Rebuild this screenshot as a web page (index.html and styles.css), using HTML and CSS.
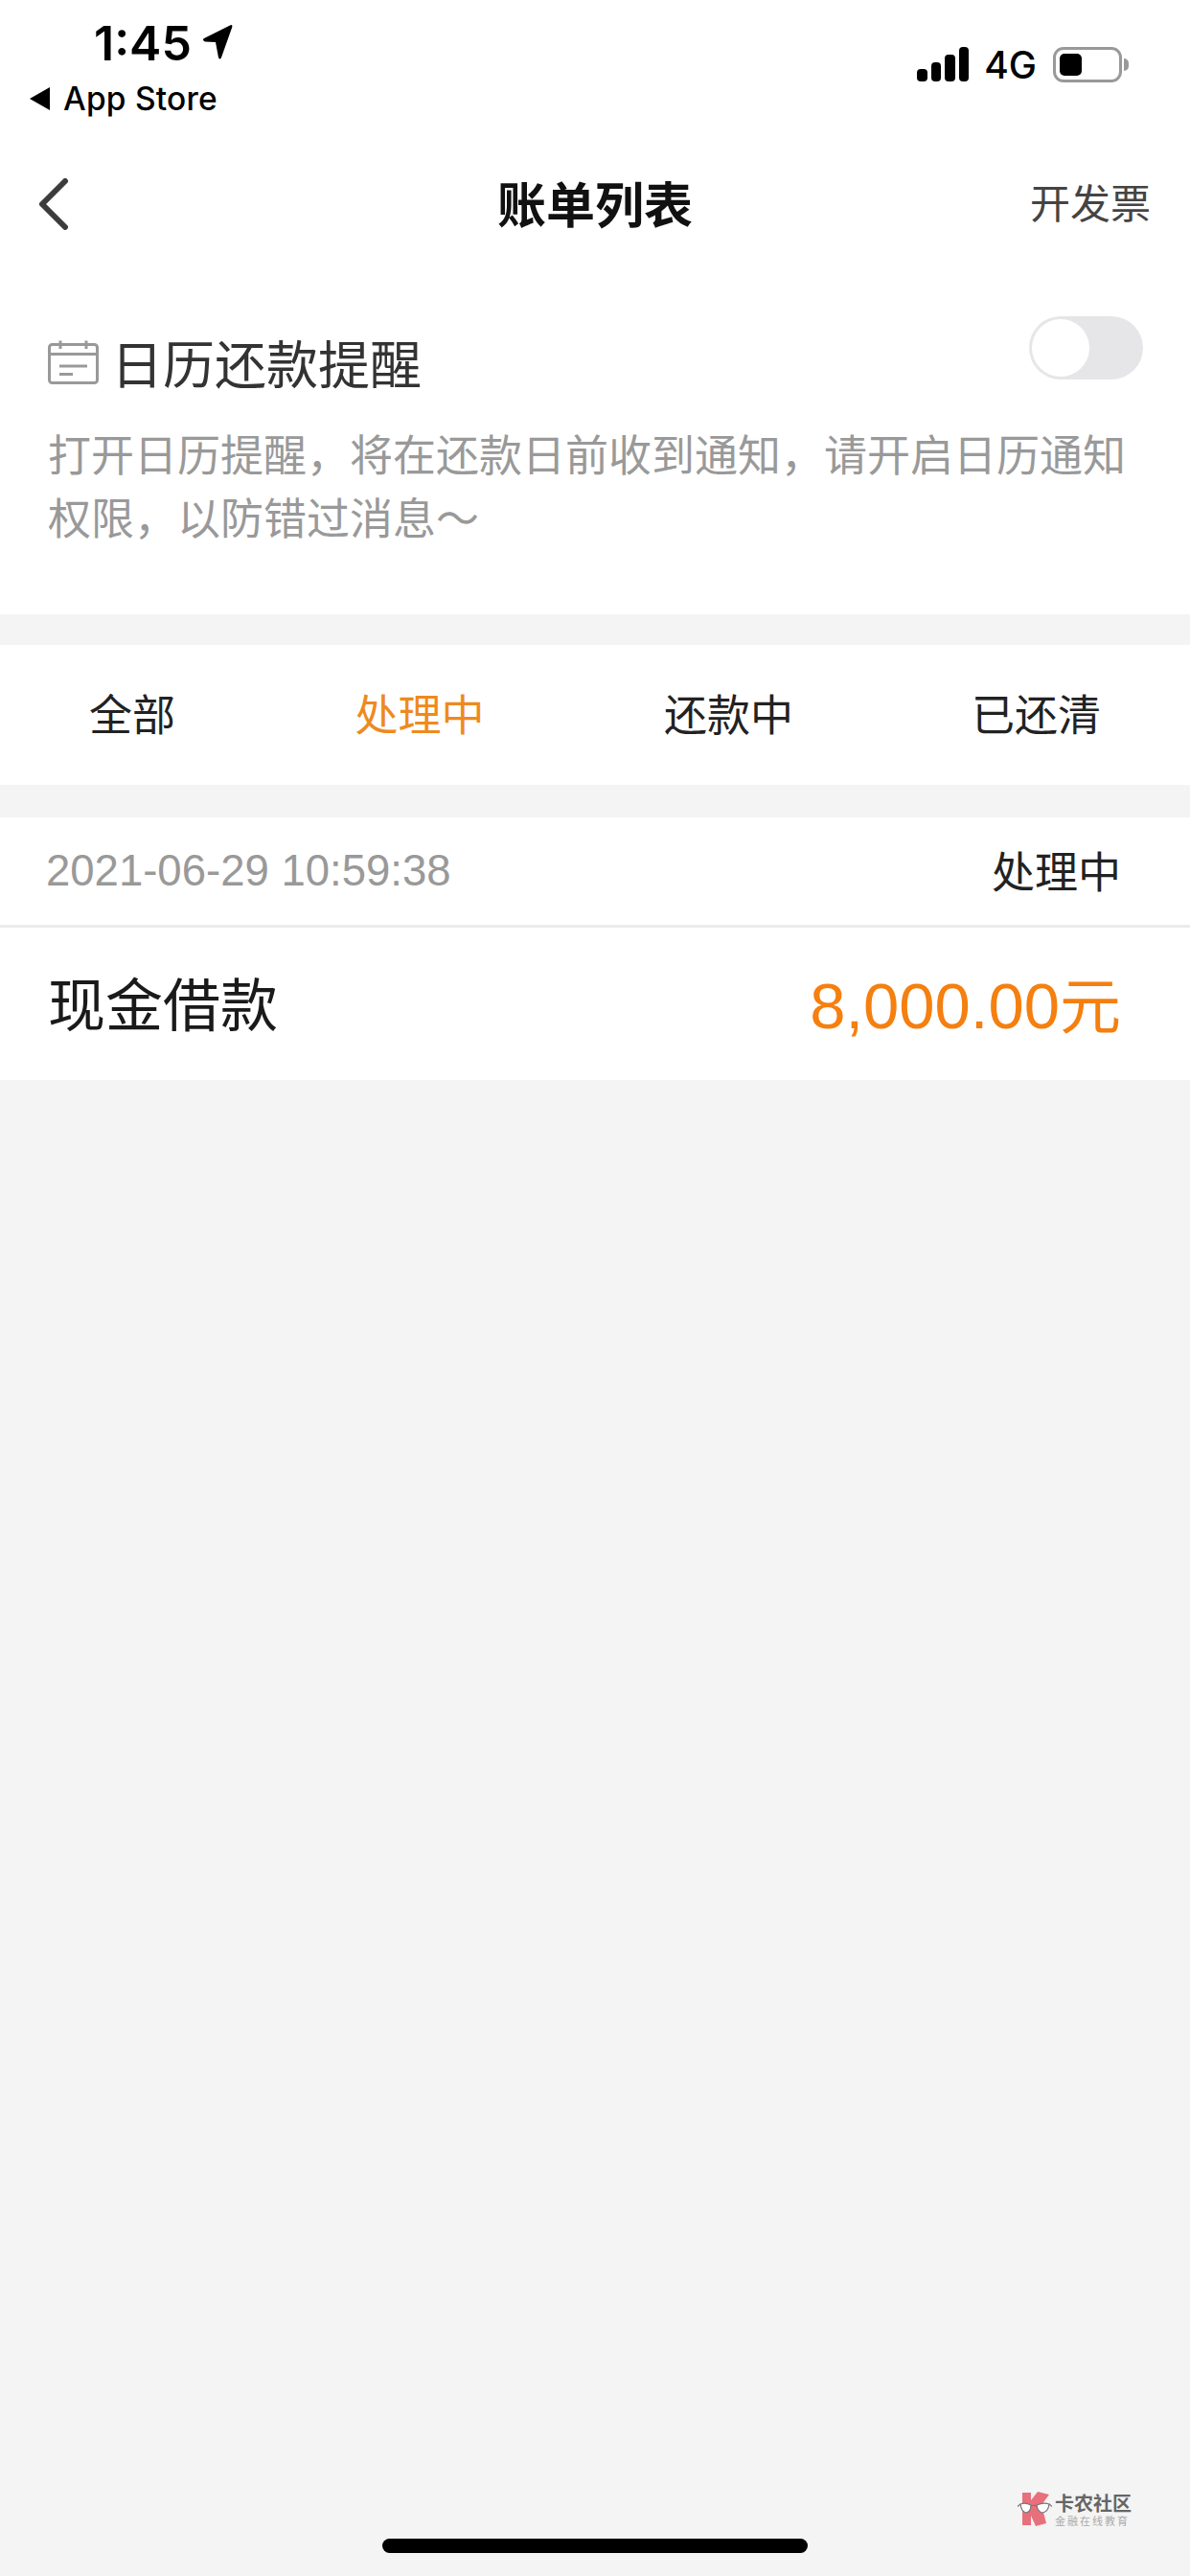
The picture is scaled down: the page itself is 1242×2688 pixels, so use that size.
FILE: index.html
```html
<!DOCTYPE html>
<html lang="zh-CN">
<head>
    <meta charset="UTF-8">
    <title>账单列表</title>
    <link rel="stylesheet" href="styles.css">
</head>
<body>
    <div class="page">
        <div class="statusbar">
            <div class="status-left">
                <div class="clock">
                    <span>1:45</span>
                    <svg class="loc-icon" viewBox="0 0 32 38"><path d="M2 15 L29 1.5 Q32 0 31.2 3.5 L20 35 Q18.500 38 17 35 L14 19 L3 18.500 Q-0.500 17 2 15 Z"/></svg>
                </div>
                <div class="back-app">
                    <svg class="back-tri" viewBox="0 0 21 24"><path d="M0 12 L21 0 V24 Z"/></svg>
                    <span>App Store</span>
                </div>
            </div>
            <div class="status-right">
                <div class="signal">
                    <i class="bar1"></i><i class="bar2"></i><i class="bar3"></i><i class="bar4"></i>
                </div>
                <span class="net">4G</span>
                <div class="battery"><div class="battery-fill"></div></div>
                <div class="battery-nub"></div>
            </div>
        </div>

        <div class="navbar">
            <svg class="nav-back" viewBox="0 0 32 54"><path d="M28 3 L4 27 L28 51"/></svg>
            <h1>账单列表</h1>
            <a class="nav-action">开发票</a>
        </div>

        <div class="reminder">
            <div class="reminder-head">
                <div class="reminder-title">
                    <svg class="cal-icon" viewBox="0 0 53 46">
                        <rect x="1.500" y="4.500" width="50" height="40" rx="3"/>
                        <path d="M1.500 14.500 H51.500 M13 0.500 V9 M40 0.500 V9 M12 27 H41 M12 35.500 H26"/>
                    </svg>
                    <span>日历还款提醒</span>
                </div>
                <div class="toggle"><div class="knob"></div></div>
            </div>
            <p class="reminder-desc">打开日历提醒，将在还款日前收到通知，请开启日历通知权限，以防错过消息～</p>
        </div>

        <div class="tabs">
            <div class="tab">全部</div>
            <div class="tab active">处理中</div>
            <div class="tab">还款中</div>
            <div class="tab">已还清</div>
        </div>

        <div class="bill">
            <div class="bill-top">
                <span class="bill-date">2021-06-29 10:59:38</span>
                <span class="bill-state">处理中</span>
            </div>
            <div class="bill-main">
                <span class="bill-name">现金借款</span>
                <span class="bill-amount">8,000.00<span class="unit">元</span></span>
            </div>
        </div>

        <div class="watermark">
            <svg class="wm-logo" viewBox="0 0 36 36">
                <path class="wm-k" d="M5 1 H14 V9 L21 0 L33 3 L25 14 L30 33 L19 36 L14 25 V35 L5 35 Z"/>
                <path class="wm-lens" d="M3 13 Q8 11 14 14 Q14 21 9 22 Q4 21 3 13 Z M20 14 Q27 11 33 13 Q32 21 26 22 Q21 21 20 14 Z"/>
                <path class="wm-arm" d="M14 15 Q17 13.500 20 15 M3 13 L0 15.500 M33 13 L36 15.500"/>
            </svg>
            <div class="wm-text">
                <div class="wm-name">卡农社区</div>
                <div class="wm-sub">金融在线教育</div>
            </div>
        </div>
        <div class="home-indicator"></div>
    </div>
</body>
</html>
```

FILE: styles.css
```css
* {
    box-sizing: border-box;
}

body {
    margin: 0;
    background-color: #f4f4f4;
    font-family: "Noto Sans CJK SC", sans-serif;
}

.page {
    position: relative;
    width: 1242px;
    height: 2688px;
    overflow: hidden;
    background-color: #f4f4f4;
}

/* status bar */
.statusbar {
    height: 150px;
    background-color: #fff;
    display: flex;
    justify-content: space-between;
    color: #000;
    font-family: Inter, sans-serif;
}

.status-left {
    padding: 20px 0 0 31px;
}

.clock {
    display: flex;
    align-items: center;
    gap: 11px;
    padding-left: 67px;
    height: 50px;
    font-size: 50px;
    font-weight: 600;
}

.loc-icon {
    width: 32px;
    height: 38px;
    margin-bottom: 2px;
}

.back-app {
    display: flex;
    align-items: center;
    gap: 14px;
    height: 40px;
    margin-top: 13px;
    font-size: 33.500px;
    font-weight: 500;
    letter-spacing: 0.200px;
}

.back-tri {
    width: 21px;
    height: 24px;
}

.status-right {
    display: flex;
    align-items: flex-start;
    padding: 49px 64px 0 0;
}

.signal {
    display: flex;
    align-items: flex-end;
    gap: 4px;
    height: 36px;
    margin-right: 16px;
}

.signal i {
    display: block;
    width: 10.500px;
    border-radius: 4px;
    background-color: #000;
}

.bar1 { height: 13px; }
.bar2 { height: 20px; }
.bar3 { height: 28px; }
.bar4 { height: 36px; }

.net {
    font-size: 39px;
    font-weight: 500;
    line-height: 38px;
    margin-right: 17px;
}

.battery {
    width: 72px;
    height: 37px;
    padding: 4px;
    border: 3px solid #999;
    border-radius: 11px;
}

.battery-fill {
    width: 23px;
    height: 100%;
    background-color: #000;
    border-radius: 5px;
}

.battery-nub {
    width: 5px;
    height: 13px;
    margin: 12px 0 0 2px;
    background-color: #999;
    border-radius: 0 5px 5px 0;
}

/* nav */
.navbar {
    position: relative;
    height: 124px;
    padding-bottom: 3px;
    background-color: #fff;
    display: flex;
    align-items: center;
    justify-content: center;
}

.nav-back {
    position: absolute;
    left: 40px;
    top: 36px;
    width: 32px;
    height: 54px;
    fill: none;
    stroke: #3c3c3c;
    stroke-width: 6;
    stroke-linecap: round;
    stroke-linejoin: round;
}

.navbar h1 {
    margin: 0;
    font-size: 51px;
    font-weight: 700;
    color: #111;
}

.nav-action {
    position: absolute;
    right: 41px;
    top: 59px;
    transform: translateY(-50%);
    font-size: 42px;
    color: #444;
}

/* calendar reminder */
.reminder {
    height: 367px;
    padding: 56px 50px 0;
    background-color: #fff;
}

.reminder-head {
    display: flex;
    justify-content: space-between;
    align-items: flex-start;
    height: 110px;
    margin-right: -1px;
}

.reminder-title {
    display: flex;
    align-items: center;
    gap: 13px;
    height: 60px;
    margin-top: 17px;
    font-size: 54px;
    color: #333;
}

.cal-icon {
    width: 53px;
    height: 46px;
    margin-top: 2px;
    fill: none;
    stroke: #999;
    stroke-width: 3;
}

.toggle {
    width: 119px;
    height: 66px;
    padding: 3px;
    border-radius: 33px;
    background-color: #e6e6e8;
}

.knob {
    width: 60px;
    height: 60px;
    border-radius: 50%;
    background-color: #fff;
}

.reminder-desc {
    margin: 0;
    font-size: 45px;
    line-height: 66px;
    color: #999;
}

/* tabs */
.tabs {
    display: grid;
    grid-template-columns: 276px 324px 321px 321px;
    align-items: center;
    height: 146px;
    padding-bottom: 5px;
    margin-top: 32px;
    background-color: #fff;
    font-size: 45px;
    color: #222;
    text-align: center;
}

.tab.active {
    color: #ee8a1d;
}

/* bill */
.bill {
    margin-top: 34px;
    background-color: #fff;
}

.bill-top {
    display: flex;
    justify-content: space-between;
    align-items: center;
    height: 115px;
    padding: 0 72px 0 48px;
    border-bottom: 3px solid #ebebeb;
}

.bill-date {
    font-family: "Liberation Sans", sans-serif;
    font-size: 45.500px;
    color: #999;
}

.bill-state {
    font-size: 45px;
    line-height: 60px;
    padding-bottom: 3px;
    color: #222;
}

.bill-main {
    display: flex;
    justify-content: space-between;
    align-items: center;
    height: 159px;
    padding: 0 72px 6px 50px;
}

.bill-name {
    font-size: 60px;
    color: #1a1a1a;
}

.bill-amount {
    font-family: "Liberation Sans", sans-serif;
    font-size: 67px;
    color: #f57f0f;
}

.unit {
    font-family: "Noto Sans CJK SC", sans-serif;
    font-size: 64px;
}

/* watermark + home bar sit over the page */
.watermark {
    position: absolute;
    left: 1062px;
    top: 2600px;
    display: flex;
    gap: 3px;
}

.wm-logo {
    width: 36px;
    height: 36px;
}

.wm-k {
    fill: #e8707c;
}

.wm-lens {
    fill: #fff;
    stroke: #777;
    stroke-width: 1.200;
}

.wm-arm {
    fill: none;
    stroke: #777;
    stroke-width: 1.200;
}

.wm-name {
    font-size: 20px;
    line-height: 24px;
    font-weight: 700;
    color: #666;
}

.wm-sub {
    font-size: 11px;
    line-height: 12px;
    letter-spacing: 2px;
    color: #aaa;
}

.home-indicator {
    position: absolute;
    left: 399px;
    top: 2649px;
    width: 444px;
    height: 15px;
    border-radius: 8px;
    background-color: #000;
}
```
